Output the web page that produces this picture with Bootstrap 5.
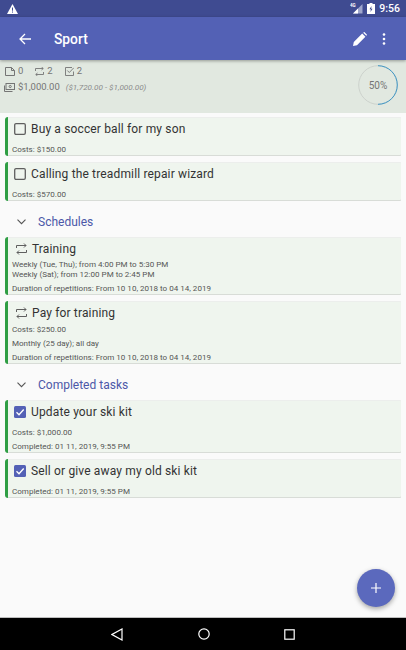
<!DOCTYPE html>
<html lang="en">

<head>
    <meta charset="UTF-8">
    <meta name="viewport" content="width=device-width, initial-scale=1.0">
    <title>Sport</title>
    <link href="https://cdn.jsdelivr.net/npm/bootstrap@5.3.3/dist/css/bootstrap.min.css" rel="stylesheet">
    <style>
        html, body { height: 100%; }
        body { font-family: Roboto, "Liberation Sans", sans-serif; background: #fafafa; overflow: hidden; }
        .screen { width: 406px; height: 650px; position: relative; }
        .status-bar { height: 17px; background: #3f4b91; color: #fff; font-size: 10.5px; font-weight: 500; padding: 0 6px 0 7px; }
        .app-bar { height: 43px; background: #5361b5; color: #fff; box-shadow: 0 1px 3px rgba(0, 0, 0, .35); position: relative; padding: 1px 20px 0 19px; }
        .app-title { font-size: 13.8px; font-weight: 500; margin-left: 23px; }
        .edit-icon { margin-right: 15px; }
        .summary { height: 53px; background: #e1e8e0; color: #757575; font-size: 9.5px; padding: 4px 8px 0 5px; }
        .summary-line { height: 14px; gap: 3px; }
        .money { margin: 2px 0 0 -1px; }
        .money em { font-size: 8.1px; margin-left: 3px; color: #8a8a8a; }
        .stat { margin-right: 9px; }
        .ring { width: 40px; height: 40px; position: relative; font-size: 10px; margin-top: 1px; }
        .ring svg { position: absolute; left: 0; top: 0; }
        .content { height: 504px; padding: 4px 5px 0; }
        .task { background: #eff5ee; border-left: 3px solid #2f9e44; box-shadow: inset 0 1px #eceeec, inset 0 -1px #d8dcd7; border-radius: 3px 1px 1px 3px; margin-bottom: 6px; padding: 0 4px; color: #555; font-size: 8.05px; }
        .task-title { font-size: 12px; color: #333; height: 24px; gap: 5px; letter-spacing: .15px; }
        .task-check { width: 12px; height: 12px; margin-left: 2px; flex: none; }
        .task-repeat { width: 11px; height: 12px; margin-left: 4px; flex: none; }
        .task-line { height: 14px; line-height: 14px; padding-top: 1px; }
        .task-title + .task-line { margin-top: 1px; }
        .task-title.repeating { padding-bottom: 1px; }
        .task-title.repeating + .task-line { margin-top: -3px; }
        .task-title.repeating + .task-line.tight { margin-top: -1px; }
        .task-line.tight { height: 9.5px; line-height: 9.5px; padding-top: 0; }
        .tight + .task-line:not(.tight) { margin-top: 2px; margin-bottom: 1px; }
        .section-head { height: 36px; color: #4c58a8; font-size: 12px; gap: 12px; padding: 6px 0 0 12px; margin-top: -6px; }
        .fab { width: 38px; height: 38px; background: #5b69bd; border-radius: 50%; position: absolute; right: 11px; top: 569px; box-shadow: 0 2px 5px rgba(0, 0, 0, .35); }
        .nav-bar { height: 33px; background: #000; border-top: 1px solid #bdbdbd; gap: 74.5px; }
    </style>
</head>

<body>
    <div class="screen">
        <div class="status-bar d-flex align-items-center justify-content-between">
            <svg width="11" height="10" viewBox="0 0 11 10"><path d="M5.500 0 11 10H0Z" fill="#fff"/><rect x="5" y="3.500" width="1" height="3.200" fill="#3f4b91"/><rect x="5" y="7.500" width="1" height="1.100" fill="#3f4b91"/></svg>
            <div class="d-flex align-items-center">
                <svg width="13" height="11" viewBox="0 0 13 11"><path d="M12.500 1V10.500H3Z" fill="#9fa6cc"/><path d="M8 5.500V10.500H3Z" fill="#fff"/><text x="0" y="4" font-size="4.500" font-weight="700" fill="#fff">4G</text></svg>
                <svg class="ms-1" width="8" height="11" viewBox="0 0 8 11"><path d="M2.500 0h3v1H8v10H0V1h2.500Z" fill="#fff"/><path d="M4.500 3 2.500 6.200h1.300L3.500 9l2-3.200H4.200Z" fill="#3f4b91"/></svg>
                <span class="ms-1">9:56</span>
            </div>
        </div>

        <div class="app-bar d-flex align-items-center">
            <svg width="12" height="12" viewBox="0 0 12 12" fill="none" stroke="#fff" stroke-width="1.300"><path d="M12 6H1M6 1 1 6l5 5"/></svg>
            <span class="app-title">Sport</span>
            <svg class="edit-icon ms-auto" width="14" height="14" viewBox="0 0 14 14"><path d="M0 14 .8 10 9.200 1.600l3.200 3.200L4 13.200ZM10.200.7 10.800.2Q11.200-.1 11.600.2L13.800 2.400Q14.100 2.800 13.800 3.200L13.300 3.800Z" fill="#fff"/></svg>
            <svg width="4" height="12" viewBox="0 0 4 12" fill="#fff"><circle cx="2" cy="1.500" r="1.300"/><circle cx="2" cy="6" r="1.300"/><circle cx="2" cy="10.500" r="1.300"/></svg>
        </div>

        <div class="summary d-flex justify-content-between">
            <div>
                <div class="summary-line d-flex align-items-center">
                    <svg width="10" height="9" viewBox="0 0 10 9" fill="none" stroke="#757575"><path d="M.5.5h6l3 3v5H.5ZM6.500.5v3h3"/></svg>
                    <span class="stat">0</span>
                    <svg width="9" height="9" viewBox="0 0 9 9" fill="none" stroke="#757575" stroke-width=".9"><path d="M.5 4V1.500h7.500M6.500 0 8.300 1.500 6.500 3M8.500 5v2.500H1M2.500 6 .7 7.500 2.500 9"/></svg>
                    <span class="stat">2</span>
                    <svg width="9" height="9" viewBox="0 0 9 9" fill="none" stroke="#757575" stroke-width=".9"><path d="M8.500 4.500v4H.5v-8h6.500M2.300 3.500l2 2L8.800.8"/></svg>
                    <span class="stat">2</span>
                </div>
                <div class="summary-line money d-flex align-items-center">
                    <svg width="11" height="9" viewBox="0 0 11 9" fill="none" stroke="#757575"><rect x="2" y=".5" width="8.500" height="6"/><path d="M.5 2.500v6H8.500"/><circle cx="6.200" cy="3.500" r="1.100"/></svg>
                    <span>$1,000.00</span><em>($1,720.00 - $1,000.00)</em>
                </div>
            </div>
            <div class="ring d-flex align-items-center justify-content-center">
                <svg width="40" height="40" viewBox="0 0 40 40" fill="none"><circle cx="20" cy="20" r="19.300" stroke="#c6ccc6" stroke-width=".8"/><path d="M20 .7A19.300 19.300 0 0 1 20 39.300" stroke="#3f97c6" stroke-width="1"/></svg>
                <span>50%</span>
            </div>
        </div>

        <div class="content">
            <div class="task">
                <div class="task-title d-flex align-items-center">
                    <svg class="task-check" viewBox="0 0 12 12" fill="none"><rect x=".7" y=".7" width="10.600" height="10.600" rx="1.300" stroke="#5f5f5f" stroke-width="1.300"/></svg>
                    Buy a soccer ball for my son
                </div>
                <div class="task-line">Costs: $150.00</div>
            </div>
            <div class="task">
                <div class="task-title d-flex align-items-center">
                    <svg class="task-check" viewBox="0 0 12 12" fill="none"><rect x=".7" y=".7" width="10.600" height="10.600" rx="1.300" stroke="#5f5f5f" stroke-width="1.300"/></svg>
                    Calling the treadmill repair wizard
                </div>
                <div class="task-line">Costs: $570.00</div>
            </div>

            <div class="section-head d-flex align-items-center">
                <svg width="9" height="6" viewBox="0 0 9 6" fill="none" stroke="#555" stroke-width="1.100"><path d="M.5.700 4.500 4.700 8.500.700"/></svg>
                Schedules
            </div>

            <div class="task">
                <div class="task-title repeating d-flex align-items-center">
                    <svg class="task-repeat" viewBox="0 0 11 12" fill="none" stroke="#5f5f5f"><path d="M.5 5V2.500h9.500M8 .5l2 2-2 2M10.500 7v2.500H1M3 7.500l-2 2 2 2"/></svg>
                    Training
                </div>
                <div class="task-line tight">Weekly (Tue, Thu); from 4:00 PM to 5:30 PM</div>
                <div class="task-line tight">Weekly (Sat); from 12:00 PM to 2:45 PM</div>
                <div class="task-line">Duration of repetitions: From 10 10, 2018 to 04 14, 2019</div>
            </div>
            <div class="task">
                <div class="task-title repeating d-flex align-items-center">
                    <svg class="task-repeat" viewBox="0 0 11 12" fill="none" stroke="#5f5f5f"><path d="M.5 5V2.500h9.500M8 .5l2 2-2 2M10.500 7v2.500H1M3 7.500l-2 2 2 2"/></svg>
                    Pay for training
                </div>
                <div class="task-line">Costs: $250.00</div>
                <div class="task-line">Monthly (25 day); all day</div>
                <div class="task-line">Duration of repetitions: From 10 10, 2018 to 04 14, 2019</div>
            </div>

            <div class="section-head d-flex align-items-center">
                <svg width="9" height="6" viewBox="0 0 9 6" fill="none" stroke="#555" stroke-width="1.100"><path d="M.5.700 4.500 4.700 8.500.700"/></svg>
                Completed tasks
            </div>

            <div class="task">
                <div class="task-title d-flex align-items-center">
                    <svg class="task-check" viewBox="0 0 12 12"><rect width="12" height="12" rx="1.500" fill="#5361b5"/><path d="M2.500 6.200 5 8.700 9.700 3.500" fill="none" stroke="#fff" stroke-width="1.300"/></svg>
                    Update your ski kit
                </div>
                <div class="task-line">Costs: $1,000.00</div>
                <div class="task-line">Completed: 01 11, 2019, 9:55 PM</div>
            </div>
            <div class="task">
                <div class="task-title d-flex align-items-center">
                    <svg class="task-check" viewBox="0 0 12 12"><rect width="12" height="12" rx="1.500" fill="#5361b5"/><path d="M2.500 6.200 5 8.700 9.700 3.500" fill="none" stroke="#fff" stroke-width="1.300"/></svg>
                    Sell or give away my old ski kit
                </div>
                <div class="task-line">Completed: 01 11, 2019, 9:55 PM</div>
            </div>
        </div>

        <div class="fab d-flex align-items-center justify-content-center">
            <svg width="10" height="10" viewBox="0 0 10 10" stroke="#fff" stroke-width="1.200"><path d="M5 0v10M0 5h10"/></svg>
        </div>

        <div class="nav-bar d-flex align-items-center justify-content-center">
            <svg width="12" height="13" viewBox="0 0 12 13" fill="none" stroke="#fff" stroke-width="1.200"><path d="M11 1v11L1 6.500Z"/></svg>
            <svg width="12" height="12" viewBox="0 0 12 12" fill="none" stroke="#fff" stroke-width="1.200"><circle cx="6" cy="6" r="5.200"/></svg>
            <svg width="11" height="11" viewBox="0 0 11 11" fill="none" stroke="#fff" stroke-width="1.200"><rect x=".8" y=".8" width="9.400" height="9.400"/></svg>
        </div>
    </div>

    <script src="https://cdn.jsdelivr.net/npm/bootstrap@5.3.3/dist/js/bootstrap.bundle.min.js"></script>
</body>

</html>
